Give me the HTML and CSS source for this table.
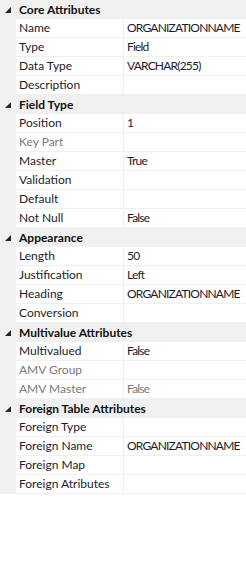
FILE: index.html
```html
<!DOCTYPE html>
<html lang="en">
<head>
    <meta charset="UTF-8">
    <title>Properties</title>
    <link rel="stylesheet" href="styles.css">
</head>
<body>
    <div class="grid">
        <!-- Core Attributes -->
        <div class="category"><span class="arrow"></span>Core Attributes</div>
        <div class="row"><div class="gutter"></div><div class="name">Name</div><div class="value">ORGANIZATIONNAME</div></div>
        <div class="row"><div class="gutter"></div><div class="name">Type</div><div class="value">Field</div></div>
        <div class="row"><div class="gutter"></div><div class="name">Data Type</div><div class="value">VARCHAR(255)</div></div>
        <div class="row"><div class="gutter"></div><div class="name">Description</div><div class="value"></div></div>

        <!-- Field Type -->
        <div class="category"><span class="arrow"></span>Field Type</div>
        <div class="row"><div class="gutter"></div><div class="name">Position</div><div class="value">1</div></div>
        <div class="row disabled"><div class="gutter"></div><div class="name">Key Part</div><div class="value"></div></div>
        <div class="row"><div class="gutter"></div><div class="name">Master</div><div class="value">True</div></div>
        <div class="row"><div class="gutter"></div><div class="name">Validation</div><div class="value"></div></div>
        <div class="row"><div class="gutter"></div><div class="name">Default</div><div class="value"></div></div>
        <div class="row"><div class="gutter"></div><div class="name">Not Null</div><div class="value">False</div></div>

        <!-- Appearance -->
        <div class="category"><span class="arrow"></span>Appearance</div>
        <div class="row"><div class="gutter"></div><div class="name">Length</div><div class="value">50</div></div>
        <div class="row"><div class="gutter"></div><div class="name">Justification</div><div class="value">Left</div></div>
        <div class="row"><div class="gutter"></div><div class="name">Heading</div><div class="value">ORGANIZATIONNAME</div></div>
        <div class="row"><div class="gutter"></div><div class="name">Conversion</div><div class="value"></div></div>

        <!-- Multivalue Attributes -->
        <div class="category"><span class="arrow"></span>Multivalue Attributes</div>
        <div class="row"><div class="gutter"></div><div class="name">Multivalued</div><div class="value">False</div></div>
        <div class="row disabled"><div class="gutter"></div><div class="name">AMV Group</div><div class="value"></div></div>
        <div class="row disabled"><div class="gutter"></div><div class="name">AMV Master</div><div class="value">False</div></div>

        <!-- Foreign Table Attributes -->
        <div class="category"><span class="arrow"></span>Foreign Table Attributes</div>
        <div class="row"><div class="gutter"></div><div class="name">Foreign Type</div><div class="value"></div></div>
        <div class="row"><div class="gutter"></div><div class="name">Foreign Name</div><div class="value">ORGANIZATIONNAME</div></div>
        <div class="row"><div class="gutter"></div><div class="name">Foreign Map</div><div class="value"></div></div>
        <div class="row"><div class="gutter"></div><div class="name">Foreign Atributes</div><div class="value"></div></div>
    </div>
</body>
</html>
```

FILE: styles.css
```css
body {
    margin: 0;
    padding: 0;
    background-color: #fff;
    font-family: Lato, "Noto Sans", sans-serif;
    font-size: 12px;
    color: #1b1b2e;
}

.grid {
    width: 246px;
}

/* Category header */
.category {
    display: flex;
    align-items: center;
    height: 19px;
    background-color: #f0f0f0;
    font-weight: bold;
    color: #111;
}

.category .arrow {
    width: 16px;
    height: 19px;
    position: relative;
    flex-shrink: 0;
    margin-right: 3px;
}

/* expanded marker: small filled corner triangle */
.category .arrow::before {
    content: "";
    position: absolute;
    left: 5px;
    top: 7px;
    border-style: solid;
    border-width: 0 0 6px 6px;
    border-color: transparent transparent #262626 transparent;
}

/* Property row */
.row {
    display: grid;
    grid-template-columns: 16px 107px 1fr;
    height: 19px;
}

.row .gutter {
    background-color: #f0f0f0;
}

.row .name,
.row .value {
    background-color: #fff;
    border-bottom: 1px solid #f0f0f0;
    line-height: 18px;
    white-space: nowrap;
    overflow: hidden;
}

.row .name {
    padding-left: 3px;
}

.row .value {
    border-left: 1px solid #f0f0f0;
    padding-left: 3px;
    letter-spacing: -0.8px;
}

.row.disabled .name,
.row.disabled .value {
    color: #7a7a7a;
}
```
